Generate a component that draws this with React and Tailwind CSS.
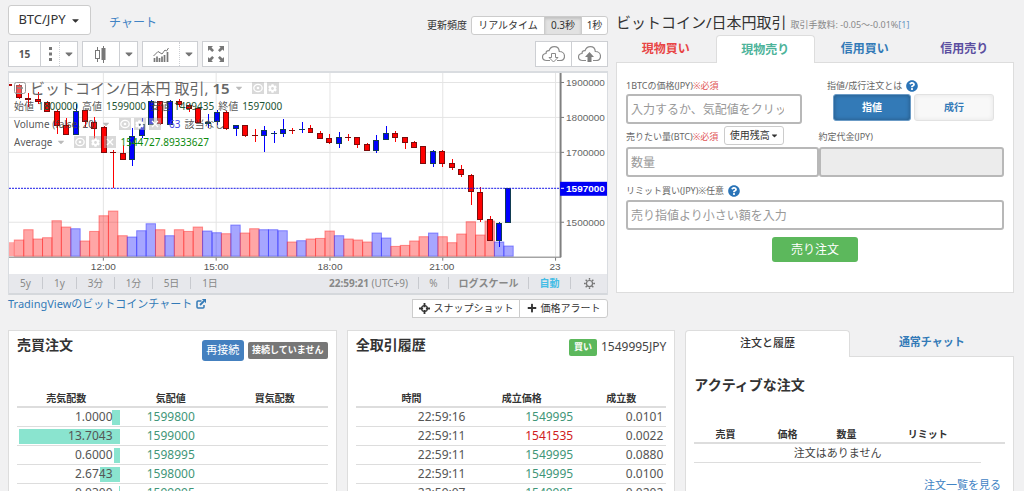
import React from "react";
import { FaCaretDown, FaCog, FaPlus, FaQuestionCircle } from "react-icons/fa";

const RED = "r";
const BLUE = "b";

// colour, high, body top, body bottom, low, volume top
const candles = [
  [RED, 84, 85, 98, 99, 240.3],
  [RED, 93, 98, 100, 107, 230],
  [RED, 92, 99, 102, 104, 239.3],
  [RED, 101, 102, 112, 112, 238],
  [RED, 110, 111, 126, 134, 221],
  [RED, 118, 125, 135, 135, 227.3],
  [BLUE, 104, 111, 135, 135, 229],
  [RED, 110, 110, 122, 127, 241.3],
  [RED, 117, 122, 129, 141, 231.7],
  [RED, 126, 127, 153, 153, 216],
  [RED, 150, 152, 153, 188, 211.3],
  [RED, 145, 153, 160, 160, 236],
  [BLUE, 128, 136, 160, 166, 237.3],
  [BLUE, 118, 124, 136, 138, 231],
  [BLUE, 100, 101, 125, 125, 224],
  [RED, 101, 101, 124, 125, 230],
  [BLUE, 100, 101, 125, 125, 236],
  [RED, 99, 101, 105, 107, 230],
  [RED, 104, 105, 109, 112, 231.7],
  [RED, 108, 108, 123, 123, 227.3],
  [BLUE, 114, 122, 124, 128, 231.3],
  [BLUE, 110, 112, 122, 125, 233],
  [RED, 111, 112, 129, 130, 234],
  [BLUE, 125, 125, 129, 136, 225.3],
  [RED, 125, 125, 136, 137, 233.3],
  [RED, 129, 135, 136, 142, 229],
  [BLUE, 126, 130, 136, 152, 230],
  [BLUE, 131, 133, 134, 143, 230],
  [BLUE, 119, 129, 134, 137, 231],
  [RED, 128, 130, 131, 134, 242.3],
  [BLUE, 122, 129, 130, 133, 241],
  [RED, 125, 128, 133, 133, 239.3],
  [RED, 131, 133, 139, 139, 238.7],
  [RED, 134, 138, 143, 144, 231.3],
  [BLUE, 132, 137, 144, 148, 236],
  [RED, 134, 137, 138, 141, 239.3],
  [RED, 137, 137, 145, 148, 240.3],
  [RED, 143, 144, 151, 151, 242.3],
  [BLUE, 135, 140, 151, 153, 233.3],
  [BLUE, 126, 133, 140, 140, 238.3],
  [RED, 131, 133, 138, 142, 246.7],
  [RED, 137, 137, 143, 149, 245.7],
  [RED, 141, 142, 148, 148, 241.3],
  [RED, 146, 146, 164, 164, 237],
  [BLUE, 150, 151, 164, 167, 233.3],
  [RED, 150, 151, 164, 167, 237],
  [RED, 159, 163, 168, 170, 243],
  [RED, 165, 169, 175, 177, 234.3],
  [RED, 174, 175, 192, 205, 222],
  [RED, 187, 192, 220, 222, 235.3],
  [RED, 216, 219, 241, 241, 221.3],
  [BLUE, 222, 223, 241, 247, 242.3],
  [BLUE, 188, 188, 223, 223, 246.3],
];

const centre = (i) => 18 + 9.43 * i;

function PriceChart() {
  return (
    <svg
      viewBox="8 73 599 201"
      className="block w-full bg-white font-['Liberation_Sans',sans-serif] text-[10px]"
      role="img"
      aria-label="BTC/JPY"
    >
      <g stroke="#e4e4e4" strokeWidth="1">
        {[82.5, 117.5, 152.5, 222.5].map((y) => (
          <line key={y} x1="8" x2="560" y1={y} y2={y} />
        ))}
        {[102.5, 215.5, 329.5, 442.5, 555.5].map((x) => (
          <line key={x} x1={x} x2={x} y1="73" y2="257" />
        ))}
      </g>
      <rect x="8" y="242.5" width="5" height="14" fill="#ffa5a5" />
      {candles.map(([c, , , , , top], i) => (
        <rect
          key={i}
          x={centre(i) - 4.7}
          y={top}
          width="9.4"
          height={256.5 - top}
          fill={c === RED ? "#ff0000" : "#0000ff"}
          fillOpacity="0.35"
          stroke={c === RED ? "#ff3030" : "#3030ff"}
          strokeOpacity="0.5"
        />
      ))}
      <rect x="8" y="84" width="3" height="2" fill="#b00000" />
      {candles.map(([c, high, top, bottom, low], i) => {
        const x = Math.round(centre(i));
        const fill = c === RED ? "#ff0000" : "#0000ff";
        return (
          <g key={i} shapeRendering="crispEdges">
            <rect x={x} y={high} width="1" height={low - high} fill={fill} />
            <rect x={x - 3} y={top} width="6" height={Math.max(1, bottom - top)} fill={c === RED ? "#7a0d0d" : "#123c52"} />
            {bottom - top > 2 && (
              <rect x={x - 2} y={top + 1} width="4" height={bottom - top - 2} fill={fill} />
            )}
          </g>
        );
      })}
      <line x1="8" x2="560" y1="188.5" y2="188.5" stroke="#1414e6" strokeDasharray="2 1" />
      <g stroke="#777" strokeWidth="1">
        <path d="M8 257.5H561" />
        <path d="M560.5 73V257.5" strokeWidth="2" stroke="#808080" />
        <path d="M561 82.5h3M561 117.5h3M561 152.5h3M561 222.5h3" />
        <path d="M102.5 258v3M215.5 258v3M329.5 258v3M442.5 258v3M555.5 258v3" />
      </g>
      <g fill="#666">
        <text x="566" y="86">1900000</text>
        <text x="566" y="121">1800000</text>
        <text x="566" y="156">1700000</text>
        <text x="566" y="226">1500000</text>
      </g>
      <rect x="560" y="182" width="47" height="14" fill="#0000f5" />
      <path d="M561 188.5h3" stroke="#fff" />
      <text x="566" y="192" fill="#fff" fontWeight="bold">1597000</text>
      <g fill="#555" textAnchor="middle">
        <text x="102.5" y="270">12:00</text>
        <text x="215.5" y="270">15:00</text>
        <text x="329.5" y="270">18:00</text>
        <text x="441.5" y="270">21:00</text>
        <text x="555" y="270">23</text>
      </g>
    </svg>
  );
}

function EyeIcon() {
  return (
    <svg viewBox="0 0 12 12" className="size-3 bg-[#b4b4b4]/50" aria-hidden="true">
      <ellipse cx="6" cy="6" rx="4.2" ry="3.6" fill="none" stroke="#fff" strokeWidth="1.3" />
      <circle cx="6" cy="6" r="1.3" fill="#fff" />
    </svg>
  );
}

function GearBox() {
  return (
    <span className="flex size-3 items-center justify-center bg-[#b4b4b4]/50 text-white">
      <FaCog size={9} />
    </span>
  );
}

function CloseBox() {
  return (
    <svg viewBox="0 0 12 12" className="size-3 bg-[#b4b4b4]/50" aria-hidden="true">
      <path d="M3 3l6 6M9 3l-6 6" stroke="#fff" strokeWidth="1.3" />
    </svg>
  );
}

function Legend() {
  return (
    <div className="absolute top-1.5 left-[5px] text-[10px] whitespace-nowrap text-[#444]/90 *:flex *:h-[18px] *:items-center">
      <div className="gap-1">
        <svg viewBox="0 0 12 12" className="size-3" aria-hidden="true">
          <rect x="0.5" y="0.5" width="11" height="11" rx="2" fill="#fff" fillOpacity="0.3" stroke="#999" />
          <path d="M3 6h6" stroke="#888" strokeWidth="1.5" />
        </svg>
        <span className="text-[15px] text-[#666]">ビットコイン/日本円 取引, <span className="font-semibold">15</span></span>
        <FaCaretDown size={10} className="text-[#bbb]" />
        <span className="ml-1 flex gap-[3px]">
          <EyeIcon />
          <GearBox />
        </span>
      </div>
      <div className="gap-1">
        <span>始値</span><span className="text-[#1d5434]">1800000</span>
        <span>高値</span><span className="text-[#1d5434]">1599000</span>
        <span>安値</span><span className="text-[#1d5434]">1499435</span>
        <span>終値</span><span className="text-[#1d5434]">1597000</span>
      </div>
      <div className="gap-1">
        <span>Volume (false, 20)</span>
        <FaCaretDown size={10} className="text-[#bbb]" />
        <span className="ml-1 flex gap-[3px]"><EyeIcon /><GearBox /><CloseBox /></span>
        <span className="ml-1 text-[#4646e6]">63</span>
        <span>該当なし</span>
      </div>
      <div className="gap-1">
        <span>Average</span>
        <FaCaretDown size={10} className="text-[#bbb]" />
        <span className="ml-1 flex gap-[3px]"><EyeIcon /><GearBox /><CloseBox /></span>
        <span className="text-[#0d8a0d]">1544727.89333627</span>
      </div>
    </div>
  );
}

const toolGroup = "flex h-[26px] items-stretch border border-[#cdcfd3] bg-white text-[#757575]";
const toolButton = "flex items-center justify-center";

function Toolbar() {
  return (
    <div className="flex pb-1 pt-[6px]">
      <div className={toolGroup}>
        <button className={`${toolButton} w-[31px] text-[10px] font-bold text-[#555]`}>15</button>
        <button className={`${toolButton} w-[19px] border-l border-[#cdcfd3]`} aria-label="間隔">
          <svg viewBox="0 0 3 14" className="h-3.5 w-[3px]" fill="#777"><path d="M0 0h3v3H0zM0 5.500h3v3H0zM0 11h3v3H0z" /></svg>
        </button>
        <button className={`${toolButton} w-[18px] border-l border-dotted border-[#cdcfd3]`} aria-label="間隔を選択"><FaCaretDown size={12} /></button>
      </div>
      <div className={`${toolGroup} ml-1`}>
        <button className={`${toolButton} w-9`} aria-label="ローソク足">
          <svg viewBox="0 0 12 17" className="h-[17px] w-3">
            <path d="M2.500 1v4M2.500 12v4M8.500 0v17" stroke="#777" />
            <rect x="0.5" y="4.500" width="4" height="8" fill="#fff" stroke="#777" />
            <rect x="6.500" y="2" width="4" height="12" fill="#777" />
          </svg>
        </button>
        <button className={`${toolButton} w-[18px] border-l border-[#cdcfd3]`} aria-label="種類を選択"><FaCaretDown size={12} /></button>
      </div>
      <div className={`${toolGroup} ml-1`}>
        <button className={`${toolButton} w-9`} aria-label="インジケーター">
          <svg viewBox="0 0 16 15" className="h-[15px] w-4">
            <path d="M0.500 9L5 4.500l4 2.500L12 3l1.500 1L15.500 1" fill="none" stroke="#777" />
            <path d="M1.500 11v4M4 9.500V15M6.500 11v4M9 9.500V15M11.500 8V15M14.500 5v10" stroke="#777" strokeWidth="1.700" />
          </svg>
        </button>
        <button className={`${toolButton} w-[18px] border-l border-dotted border-[#cdcfd3]`} aria-label="インジケーターを選択"><FaCaretDown size={12} /></button>
      </div>
      <div className={`${toolGroup} ml-1`}>
        <button className={`${toolButton} w-[25px]`} aria-label="全画面">
          <svg viewBox="0 0 16 16" className="size-4" fill="#777">
            <path d="M0 0h5L3.500 1.500 6 4.200 4.200 6 1.500 3.500 0 5zM16 0v5L14.500 3.500 11.800 6 10 4.200 12.500 1.500 11 0zM0 16v-5L1.500 12.500 4.200 10 6 11.800 3.500 14.500 5 16zM16 16h-5L12.500 14.500 10 11.800 11.800 10 14.500 12.500 16 11z" />
          </svg>
        </button>
      </div>
      <div className={`${toolGroup} ml-auto`}>
        <button className={`${toolButton} w-[35px]`} aria-label="読み込み">
          <Cloud><path d="M9.500 7.500h4v4h2.500l-4.500 4.500L7 11.500h2.500z" fill="#fff" stroke="#8a8a8a" /></Cloud>
        </button>
        <button className={`${toolButton} w-9 border-l border-[#cdcfd3]`} aria-label="保存">
          <Cloud><path d="M9.500 16v-5H7l4.500-5 4.500 5h-2.500v5z" fill="#808080" /></Cloud>
        </button>
      </div>
    </div>
  );
}

function Cloud({ children }) {
  return (
    <svg viewBox="0 0 23 17" className="h-[17px] w-[23px]" fill="none">
      <path
        d="M8 14.500H4.500C2 14.500.5 13 .5 11c0-2 1.500-3.300 3.500-3.500C4 5.500 5 4.500 7 4.700 8 2 10 .7 12.300.7c3 0 4.800 2 5 4.800 3 0 5.200 2 5.200 4.700 0 2.600-2 4.300-4.500 4.300h-3"
        stroke="#8a8a8a"
        strokeWidth="1.200"
      />
      {children}
    </svg>
  );
}

function ChartFooter() {
  return (
    <div className="flex h-[21px] items-center border-b-2 border-[#d5d8dc] bg-[#e7e8ec] text-[10px] text-[#888]">
      <div className="flex divide-x divide-[#c8cacf] leading-3">
        {["5y", "1y"].map((t) => <button key={t} className="w-[34px]">{t}</button>)}
        {["3分", "1分", "5日", "1日"].map((t) => <button key={t} className="w-[38px]">{t}</button>)}
      </div>
      <div className="ml-auto flex divide-x divide-[#c8cacf] leading-3">
        <span className="pr-2.5"><b>22:59:21</b> (UTC+9)</span>
        <button className="w-[30px]">%</button>
        <button className="w-20 font-bold">ログスケール</button>
        <button className="w-[42px] font-bold text-[#45bde6]">自動</button>
        <button className="flex w-9 items-center justify-center" aria-label="設定">
          <svg viewBox="0 0 12 12" className="size-[11px]" fill="none" stroke="#777">
            <circle cx="6" cy="6" r="3.300" strokeWidth="1.300" />
            <path d="M6 0v2M6 10v2M0 6h2M10 6h2M1.800 1.800l1.400 1.400M8.800 8.800l1.400 1.400M10.200 1.800L8.800 3.200M3.200 8.800l-1.400 1.400" strokeWidth="1.500" />
          </svg>
        </button>
      </div>
    </div>
  );
}

const smallButton = "flex h-[19px] items-center justify-center border border-[#ccc] text-[10px] text-[#333]";

function ChartSection() {
  return (
    <section>
      <header className="flex h-[30px]">
        <button className="flex h-[30px] w-[83px] items-center justify-center gap-1 rounded-[3px] border border-[#ccc] bg-white text-[13px] text-[#333]">
          BTC/JPY <FaCaretDown size={11} />
        </button>
        <a href="#chart" className="ml-[18px] mt-2 text-xs leading-5 text-[#4183c4]">チャート</a>
        <div className="ml-auto mt-[11px] flex h-[19px] items-center text-[10px]">
          <span className="mr-1 text-[#333]">更新頻度</span>
          <button className={`${smallButton} w-[74px] rounded-l-[3px] bg-white`}>リアルタイム</button>
          <button className={`${smallButton} -ml-px w-[38px] bg-[#e2e2e2] shadow-[inset_0_2px_3px_rgba(0,0,0,0.15)]`}>0.3秒</button>
          <button className={`${smallButton} -ml-px w-[27px] rounded-r-[3px] bg-white`}>1秒</button>
        </div>
      </header>
      <Toolbar />
      <div className="border-x border-t-2 border-[#d9dce0]">
        <div className="relative">
          <PriceChart />
          <Legend />
        </div>
        <ChartFooter />
      </div>
      <div className="flex justify-between">
        <a href="#tradingview" className="flex h-[19px] items-center gap-1 text-[11px] text-[#337ab7]">
          TradingViewのビットコインチャート
          <svg viewBox="0 0 10 10" className="size-[10px]" aria-hidden="true">
            <path d="M5.500 2H2Q1 2 1 3v5q0 1 1 1h5q1 0 1-1V6" fill="none" stroke="#337ab7" strokeWidth="1.500" />
            <path d="M4 6l4-4" stroke="#337ab7" strokeWidth="1.800" />
            <path d="M5.800 0H10v4.200z" fill="#337ab7" />
          </svg>
        </a>
        <div className="mt-1 flex">
          <button className={`${smallButton} w-[108px] gap-1 bg-white`}>
            <svg viewBox="0 0 12 12" className="size-[11px]" fill="none" stroke="#333">
              <circle cx="6" cy="6" r="3.200" strokeWidth="1.300" />
              <path d="M6 0v4.500M6 7.500V12M0 6h4.500M7.500 6H12" strokeWidth="2" />
            </svg>
            スナップショット
          </button>
          <button className={`${smallButton} -ml-px w-[89px] gap-1 rounded-r-[3px] bg-white`}><FaPlus size={10} />価格アラート</button>
        </div>
      </div>
    </section>
  );
}

const inputBox = "h-[30px] w-full rounded-[3px] border-2 border-[#b8b8b8] pl-[3px] text-xs text-[#333] outline-none placeholder:text-[#999]";
const labelText = "text-[9px] leading-[14px] text-[#666]";

function OrderForm() {
  const tab = "flex-1 border-b border-[#ddd] text-center text-xs font-bold";
  return (
    <section>
      <h1 className="mt-[5px] flex h-[25px] items-center whitespace-nowrap text-[15px] text-[#333]">
        ビットコイン/日本円取引
        <small className="ml-1 mt-1 text-[9px] text-[#888]">取引手数料: -0.05～-0.01%<a href="#fee" className="text-[#6a97c4]">[1]</a></small>
      </h1>
      <div className="grid h-[28px] grid-cols-4" role="tablist">
        <button role="tab" className={`${tab} text-[#e84545]`}>現物買い</button>
        <button role="tab" aria-selected="true" className="rounded-t border border-b-0 border-[#ddd] bg-white text-center text-xs font-bold text-[#4db39a]">現物売り</button>
        <button role="tab" className={`${tab} text-[#337ab7]`}>信用買い</button>
        <button role="tab" className={`${tab} text-[#5b4ea0]`}>信用売り</button>
      </div>
      <form className="border border-t-0 border-[#ddd] bg-white px-[9px] pb-[30px] pt-[15px]">
        <div className="flex justify-between">
          <div className="w-[176px]">
            <label htmlFor="price" className={`${labelText} flex h-4 items-center`}>1BTCの価格(JPY)<span className="text-[#e05555]">※必須</span></label>
            <input id="price" className={`${inputBox} bg-white pr-4`} placeholder="入力するか、気配値をクリック" />
          </div>
          <div className="w-[177px]">
            <span className={`${labelText} flex h-4 items-center gap-1`}>指値/成行注文とは <FaQuestionCircle size={12} className="text-[#2a74b8]" /></span>
            <div className="flex gap-[3px] pl-1.5 text-[10px] font-bold">
              <button type="button" className="h-[27px] w-[78px] rounded-[3px] border border-[#6b9bc6] bg-[#337ab7] text-white shadow-[inset_0_0_4px_rgba(0,0,0,0.3)]">指値</button>
              <button type="button" className="h-[27px] w-20 rounded-[3px] border border-[#e2e2e2] bg-[#f8f8f8] text-[#337ab7] shadow-[inset_0_0_5px_rgba(0,0,0,0.08)]">成行</button>
            </div>
          </div>
        </div>
        <div className="mt-px flex">
          <div className="flex-[192]">
            <div className="flex h-[22px] items-start pt-px">
              <label htmlFor="amount" className={`${labelText} pt-1`}>売りたい量(BTC)<span className="text-[#e05555]">※必須</span></label>
              <button type="button" className={`${smallButton} ml-1.5 w-[60px] rounded-[3px] bg-white`}>使用残高<FaCaretDown size={9} /></button>
            </div>
            <input id="amount" className={`${inputBox} bg-white`} placeholder="数量" />
          </div>
          <div className="flex-[185]">
            <label htmlFor="total" className={`${labelText} flex h-[22px] items-start pt-[5px]`}>約定代金(JPY)</label>
            <input id="total" readOnly className={`${inputBox} bg-[#ececec]`} />
          </div>
        </div>
        <label htmlFor="limit" className={`${labelText} mb-px mt-[6px] flex h-4 items-center gap-1`}>リミット買い(JPY)※任意 <FaQuestionCircle size={12} className="text-[#2a74b8]" /></label>
        <input id="limit" className={`${inputBox} bg-white`} placeholder="売り指値より小さい額を入力" />
        <button type="button" className="mx-auto mt-[7px] block h-[25px] w-[86px] rounded-[3px] bg-[#5cb85c] text-xs text-white">売り注文</button>
      </form>
    </section>
  );
}

const asks = [
  ["1.0000", "1599800", 8],
  ["13.7043", "1599000", 101],
  ["0.6000", "1598995", 6],
  ["2.6743", "1598000", 20],
  ["0.0300", "1599995", 1],
];

const trades = [
  ["22:59:16", "1549995", "0.0101"],
  ["22:59:11", "1541535", "0.0022"],
  ["22:59:11", "1549995", "0.0880"],
  ["22:59:11", "1549995", "0.0100"],
  ["22:59:07", "1549995", "0.0202"],
];

const panel = "border border-[#ddd] bg-white px-2";
const headRow = "h-[29px] border-b-2 border-[#ddd] align-bottom text-[10px] leading-4 text-[#333]";
const bodyRow = "h-[19px] border-b border-[#ddd] text-xs leading-[18px] text-[#555]";

function OrderBook() {
  return (
    <section className={panel}>
      <header className="flex h-[47px] items-start">
        <h2 className="mt-1 text-sm font-bold leading-5 text-[#333]">売買注文</h2>
        <button className="ml-auto mt-[9px] h-[21px] w-[42px] rounded-[3px] bg-[#4480bf] text-[11px] text-white">再接続</button>
        <span className="ml-1 mt-[11px] flex h-[17px] w-20 items-center justify-center rounded-[2px] bg-[#777] text-[9px] font-bold text-white">接続していません</span>
      </header>
      <table className="w-full table-fixed">
        <colgroup><col className="w-[33%]" /><col className="w-[33%]" /><col /></colgroup>
        <thead>
          <tr className={headRow}>
            <th className="pr-1">売気配数</th>
            <th>気配値</th>
            <th>買気配数</th>
          </tr>
        </thead>
        <tbody>
          {asks.map(([qty, price, width], i) => (
            <tr key={i} className={bodyRow}>
              <td className="relative pr-[7px] text-right">
                <span className="absolute right-0 top-0.5 h-[15px] bg-[#8ae4cf]" style={{ width }} />
                <span className="relative">{qty}</span>
              </td>
              <td className="text-center text-[#3f9678]">{price}</td>
              <td />
            </tr>
          ))}
        </tbody>
      </table>
    </section>
  );
}

function TradeHistory() {
  return (
    <section className={panel}>
      <header className="flex h-[47px] items-start">
        <h2 className="mt-1 text-sm font-bold leading-5 text-[#333]">全取引履歴</h2>
        <span className="ml-auto mt-2 flex h-[17px] w-7 items-center justify-center rounded-[2px] bg-[#5cb85c] text-[9px] font-bold text-white">買い</span>
        <span className="ml-1 mt-[7px] text-xs leading-[18px] text-[#444]">1549995JPY</span>
      </header>
      <table className="w-full table-fixed">
        <colgroup><col className="w-[36%]" /><col className="w-[35%]" /><col /></colgroup>
        <thead>
          <tr className={headRow}>
            <th>時間</th>
            <th>成立価格</th>
            <th>成立数</th>
          </tr>
        </thead>
        <tbody>
          {trades.map(([time, price, qty], i) => (
            <tr key={i} className={bodyRow}>
              <td className="pr-0.5 text-right">{time}</td>
              <td className={price === "1541535" ? "pr-[3px] text-right text-[#d02020]" : "pr-[3px] text-right text-[#3f9678]"}>{price}</td>
              <td className="pr-[3px] text-right">{qty}</td>
            </tr>
          ))}
        </tbody>
      </table>
    </section>
  );
}

function ActiveOrders() {
  return (
    <section className="flex flex-col">
      <div className="grid h-[27px] grid-cols-2 text-[11px] font-bold" role="tablist">
        <button role="tab" aria-selected="true" className="rounded-t border border-b-0 border-[#ddd] bg-white font-medium text-[#333]">注文と履歴</button>
        <button role="tab" className="border-b border-[#ddd] text-[#337ab7]">通常チャット</button>
      </div>
      <div className="flex-1 border border-t-0 border-[#ddd] bg-white px-2 pt-[18px]">
        <h2 className="text-sm font-bold leading-5 text-[#333]">アクティブな注文</h2>
        <table className="mt-[19px] w-full table-fixed">
          <colgroup><col className="w-[20%]" /><col className="w-[20%]" /><col className="w-[18%]" /><col /></colgroup>
          <thead>
            <tr className={headRow}>
              <th>売買</th><th>価格</th><th>数量</th><th className="pr-6">リミット</th>
            </tr>
          </thead>
        </table>
        <p className="mr-6 h-[19px] border-b border-[#ddd] text-center text-[11px] leading-[18px] text-[#444]">注文はありません</p>
        <a href="#orders" className="mr-1 mt-3 block text-right text-[11px] leading-5 text-[#4183c4]">注文一覧を見る</a>
      </div>
    </section>
  );
}

export default function App() {
  return (
    <main className="min-h-screen bg-[#f1f1f2] pl-2 pr-[10px] pt-[5px] font-['Noto_Sans','Noto_Sans_CJK_JP',sans-serif]">
      <div className="grid grid-cols-[600fr_398fr] items-start gap-2">
        <ChartSection />
        <OrderForm />
      </div>
      <div className="mt-3 grid grid-cols-3 gap-[10px]">
        <OrderBook />
        <TradeHistory />
        <ActiveOrders />
      </div>
    </main>
  );
}
